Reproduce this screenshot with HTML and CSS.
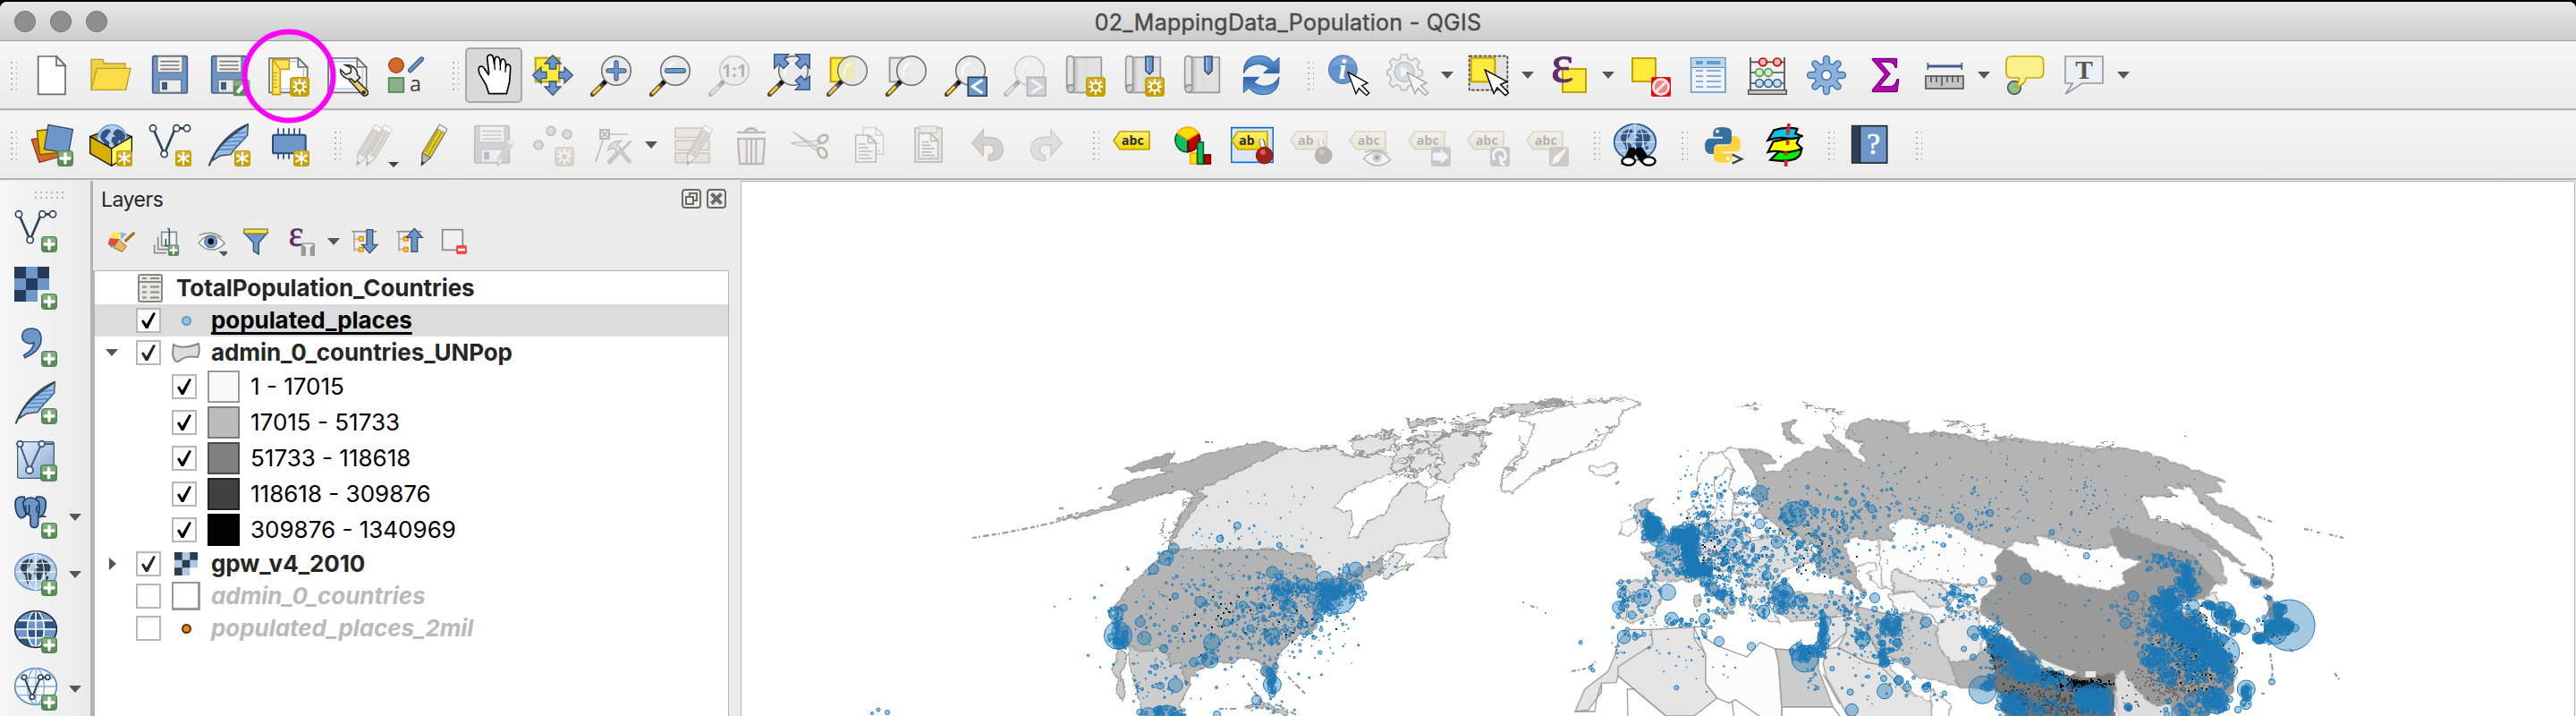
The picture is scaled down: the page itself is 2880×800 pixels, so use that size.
FILE: index.html
```html
<!DOCTYPE html>
<html lang="en">
<head>
<meta charset="utf-8">
<title>02_MappingData_Population - QGIS</title>
<link rel="stylesheet" href="styles.css">
</head>
<body>
<svg class="defs" width="0" height="0" aria-hidden="true">
<defs>
  <linearGradient id="gBlue" x1="0" y1="0" x2="0" y2="1"><stop offset="0" stop-color="#6fa0dc"/><stop offset="1" stop-color="#2c62a6"/></linearGradient>
  <linearGradient id="gPage" x1="0" y1="0" x2="1" y2="0"><stop offset="0" stop-color="#bdbdbd"/><stop offset=".4" stop-color="#e2e2e2"/><stop offset="1" stop-color="#dcdcdc"/></linearGradient>
  <linearGradient id="gMesh" x1="0" y1="0" x2="1" y2="1"><stop offset="0" stop-color="#eef2f8"/><stop offset="1" stop-color="#7ea3d2"/></linearGradient>
  <linearGradient id="gYel" x1="0" y1="0" x2="0" y2="1"><stop offset="0" stop-color="#fff27a"/><stop offset="1" stop-color="#ecd500"/></linearGradient>
</defs>
<symbol id="b-plus" viewBox="0 0 54 54"><rect x="1.500" y="1.500" width="51" height="51" rx="9" fill="#5a8c5a" stroke="#4e854e" stroke-width="3"/><path d="M5 8q0-4 4-4h36q4 0 4 4v18H5z" fill="#83ad83"/><path d="M27 12v30M12 27h30" stroke="#fff" stroke-width="10" stroke-linecap="round"/></symbol>
<symbol id="b-star" viewBox="0 0 54 54"><rect width="54" height="54" rx="9" fill="#c4a000"/><path d="M5 8q0-4 4-4h36q4 0 4 4v18H5z" fill="#d3b53c"/><path d="M27 7v40M9.700 17l34.600 20M44.300 17L9.700 37" stroke="#fff" stroke-width="6.500" stroke-linecap="round"/></symbol>
<symbol id="b-gear" viewBox="0 0 66 66"><rect width="66" height="66" rx="11" fill="#c4a000"/><path d="M6 10q0-4 4-4h46q4 0 4 4v20H6z" fill="#d3b53c"/><path d="M33 7v52M9 33h48M14 15l38 36M52 15L14 51" stroke="#fff" stroke-width="6"/><circle cx="33" cy="33" r="13" fill="#c4a000" stroke="#fff" stroke-width="6"/><circle cx="33" cy="33" r="6" fill="#c4a000"/></symbol>
<symbol id="land" viewBox="0 0 100 100"><path d="M8 38l6-16 14-8 14 0 2 10-8 4-4 10-8 6 6 6 10 8-2 14-8 14-6-12-2-14-8-8-4-8zM52 30l4-10 12-8 16 8 10 14-2 16-8 2-4 8-6-10-6 0-2-8zM50 40l14-2 10 8-4 12-4 14-8 6-4-14-8-10zM80 62l8 0 0 8-8 4z"/></symbol>
<symbol id="graticule" viewBox="0 0 144 126"><ellipse cx="72" cy="63" rx="28" ry="60"/><path d="M4 63h136M14 34h116M14 92h116M72 3v120"/></symbol>
<symbol id="lens" viewBox="0 0 144 144"><path d="M7 137L44 100" stroke="#4a4a4a" stroke-width="16" stroke-linecap="round"/><path d="M9 135L34 110" stroke="#fcc414" stroke-width="9"/><path d="M9 132L32 108" stroke="#ffe58a" stroke-width="3"/><circle cx="48" cy="96" r="8" fill="#111"/><circle cx="87" cy="57" r="49" fill="#e9e9e9" stroke="#6a6a6a" stroke-width="4.500"/><path d="M60 72c-4-22 8-36 24-40" fill="none" stroke="#fff" stroke-width="8" opacity=".7" stroke-linecap="round"/></symbol>
<symbol id="cursor" viewBox="0 0 78 84"><path d="M3 3l66 36-19 9 24 24-9 9-25-24-10 18z" fill="#fff" stroke="#000" stroke-width="4" stroke-linejoin="miter"/></symbol>
<symbol id="tag" viewBox="0 0 126 66"><path d="M3 33L24 3h99v60H24z" fill="url(#gYel)" stroke="#c4a000" stroke-width="5"/></symbol>
<symbol id="feather" viewBox="0 0 144 144"><path d="M136 2C92 18 42 62 22 106l-4 18 24-16 36-4 14-20 42-44z" fill="#9bbde6" stroke="#2e4459" stroke-width="4"/><path d="M60 62l60-4M48 74l60-2M36 88l56-2M72 48l60-4M88 34l46-4" stroke="#5b8cc9" stroke-width="5"/><path d="M134 3C88 34 30 70 5 142" fill="none" stroke="#2e4459" stroke-width="6"/></symbol>
<symbol id="vnodes" viewBox="0 0 144 144"><path d="M15 16L53 102 90 16h38" fill="none" stroke="#2e4459" stroke-width="8"/><g fill="#fff" stroke="#2e4459" stroke-width="5"><circle cx="15" cy="16" r="11"/><circle cx="53" cy="102" r="11"/><circle cx="94" cy="16" r="11"/><circle cx="129" cy="16" r="11"/></g></symbol>
<symbol id="floppy" viewBox="0 0 144 144"><path d="M20 8h104q6 0 6 6v112q0 6-6 6H20q-6 0-6-6V14q0-6 6-6z" fill="#6d97c9" stroke="#3e5f87" stroke-width="5"/><rect x="30" y="9" width="84" height="54" rx="4" fill="#f2f2f2" stroke="#7a7a7a" stroke-width="4"/><path d="M40 26h64M40 39h64M40 52h64" stroke="#7a7a7a" stroke-width="5"/><rect x="36" y="87" width="74" height="43" fill="#ececec" stroke="#777" stroke-width="4"/><rect x="45" y="95" width="18" height="26" fill="#3b5a85"/></symbol>
<symbol id="pencil" viewBox="0 0 90 144"><path d="M64 4l26 15-56 95-30 26 3-42z" fill="#e5d22c" stroke="#777" stroke-width="4"/><path d="M64 4l26 15-8 13-25-15z" fill="#eee" stroke="#999" stroke-width="3"/><path d="M60 22L18 96M72 28L28 104" stroke="#b39b00" stroke-width="5"/><path d="M7 98l27 16-30 26z" fill="#b5b5b5" stroke="#555" stroke-width="3"/><path d="M5 126l8 5-10 10z" fill="#222"/></symbol>
<symbol id="redpencil" viewBox="0 0 90 144"><path d="M64 4l26 15-56 95-30 26 3-42z" fill="#cfa79c" stroke="#8a6a62" stroke-width="4"/><path d="M64 4l26 15-8 13-25-15z" fill="#fff" stroke="#999" stroke-width="3"/><path d="M60 22L18 96M72 28L28 104" stroke="#a07468" stroke-width="5"/><path d="M7 98l27 16-30 26z" fill="#eee" stroke="#555" stroke-width="3"/><path d="M5 126l8 5-10 10z" fill="#222"/></symbol>
<symbol id="map" viewBox="0 0 144 144"><path d="M36 12h94v118H26" fill="#e1e1e1" stroke="#979797" stroke-width="5"/><rect x="38" y="15" width="45" height="110" fill="url(#gPage)"/><path d="M14 20q0-12 12-12t12 12v86q-24-6-24 12z" fill="#e4e4e4" stroke="#979797" stroke-width="5"/><path d="M38 106q-22-4-22 12t14 11l8-6z" fill="#cfcfcf" stroke="#979797" stroke-width="5"/></symbol>
<symbol id="ribbon" viewBox="0 0 30 66"><path d="M3 3h24v48l-12 12-12-12z" fill="#6d97c9" stroke="#34527a" stroke-width="5"/><path d="M9 6v44" stroke="#9fc0e8" stroke-width="5"/></symbol>

<symbol id="i-new" viewBox="0 0 144 144"><path d="M26 9h62l29 30v97H26z" fill="#fff" stroke="#6c6c6c" stroke-width="5"/><path d="M87 9v31h30z" fill="#eee" stroke="#6c6c6c" stroke-width="5"/></symbol>
<symbol id="i-open" viewBox="0 0 144 144"><path d="M6 120V19h39l4 14h71v20" fill="#f0d048" stroke="#b9a02c" stroke-width="4"/><path d="M6 121L25 49h113l-16 72z" fill="#fcdc45" stroke="#b9a02c" stroke-width="4"/></symbol>
<symbol id="i-save" viewBox="0 0 144 144"><use href="#floppy" width="144" height="144" x="0" y="0"/></symbol>
<symbol id="i-saveas" viewBox="0 0 144 144"><use href="#floppy" width="144" height="144" x="0"/><rect x="86" y="86" width="56" height="56" rx="8" fill="#5a8c5a"/><path d="M88 90h52v18H88z" fill="#83ad83"/><path d="M100 130l26-30" stroke="#fff" stroke-width="12"/></symbol>
<symbol id="page-frame" viewBox="0 0 144 144"><path d="M9 15h98l30 30v85H9z" fill="#fff" stroke="#6c6c6c" stroke-width="5"/><path d="M20 26h84M124 50v68H20V26" fill="none" stroke="#b4c8f0" stroke-width="5"/><path d="M106 15v30h30z" fill="#eee" stroke="#6c6c6c" stroke-width="5"/></symbol>
<symbol id="i-layout" viewBox="0 0 144 144"><use href="#page-frame" width="144" height="144"/><path d="M20 20h56v32H46v85H20z" fill="#fce45c" stroke="#c4a000" stroke-width="5"/><path d="M20 20l26 32M22 64h14M22 76h10M22 88h14M22 100h10M22 112h14" stroke="#c4a000" stroke-width="4"/><use href="#b-gear" x="78" y="78" width="66" height="66"/></symbol>
<symbol id="i-manager" viewBox="0 0 144 144"><use href="#page-frame" width="144" height="144"/><path d="M90 74l52 52q4 14-14 16L80 90z" fill="#ecd06a" stroke="#333" stroke-width="5"/><circle cx="128" cy="130" r="7" fill="#333"/><path d="M66 38q22-2 36 14 6 12 4 18l10 10-18 16-12-12q-14 4-26-8-12-10-10-22l18 16 16-6 2-16z" fill="#e8ece8" stroke="#333" stroke-width="5"/></symbol>
<symbol id="i-style" viewBox="0 0 144 144"><circle cx="39" cy="39" r="25" fill="#d4682a" stroke="#96461a" stroke-width="4"/><path d="M86 56l38-38" stroke="#35587f" stroke-width="16" stroke-linecap="round"/><path d="M86 56l38-38" stroke="#6d97c9" stroke-width="9" stroke-linecap="round"/><rect x="14" y="81" width="50" height="48" fill="#8bb08b" stroke="#4e854e" stroke-width="5"/><text x="84" y="125" class="glyph" font-size="70" fill="#3c3c3c">a</text></symbol>
<symbol id="i-hand" viewBox="0 0 144 144"><path d="M56 134L46 104 26 70Q18 54 24 44q10-6 18 8l12 18 2-4L50 14Q52 2 62 4q8 2 9 12l3 20q0-28 10-26 10 0 10 28 2-22 10-20 10 2 8 30 2-14 9-12 8 2 7 14l-3 44-10 40z" fill="#fff" stroke="#000" stroke-width="5"/><path d="M74 32l2 22M94 36l0 20M112 46l-1 16" stroke="#000" stroke-width="4"/></symbol>
<symbol id="i-panmap" viewBox="0 0 144 144"><rect x="14" y="14" width="80" height="80" fill="#ffeb3c" stroke="#c4a000" stroke-width="6"/><g fill="#6d97c9" stroke="#34527a" stroke-width="4"><path id="pa" d="M72 5l27 28H83v18H61V33H45z"/><use href="#pa" transform="rotate(90 72 72)"/><use href="#pa" transform="rotate(180 72 72)"/><use href="#pa" transform="rotate(270 72 72)"/></g></symbol>
<symbol id="i-zoomin" viewBox="0 0 144 144"><use href="#lens" width="144" height="144"/><path d="M87 30v54M60 57h54" stroke="#35587f" stroke-width="16" stroke-linecap="round"/><path d="M87 30v54M60 57h54" stroke="#6d97c9" stroke-width="10" stroke-linecap="round"/></symbol>
<symbol id="i-zoomout" viewBox="0 0 144 144"><use href="#lens" width="144" height="144"/><path d="M60 57h54" stroke="#35587f" stroke-width="18" stroke-linecap="round"/><path d="M60 57h54" stroke="#6d97c9" stroke-width="12" stroke-linecap="round"/></symbol>
<symbol id="i-zoom11" viewBox="0 0 144 144"><use href="#lens" width="144" height="144"/><text x="87" y="78" class="glyph" font-size="60" font-weight="700" text-anchor="middle" fill="#333">1:1</text></symbol>
<symbol id="i-zoomfull" viewBox="0 0 144 144"><use href="#lens" width="144" height="144"/><g fill="#6d97c9" stroke="#34527a" stroke-width="4"><path d="M23 2h48L56 17l16 16-18 17-16-16-15 15z"/><path d="M142 2v47l-15-15-16 16-17-17 16-16L94 2z"/><path d="M142 121H94l15-15-15-15 18-17 15 15 15-14z"/></g></symbol>
<symbol id="i-zoomsel" viewBox="0 0 144 144"><rect x="14" y="14" width="80" height="80" fill="#ffeb3c" stroke="#c4a000" stroke-width="6"/><use href="#lens" width="144" height="144" opacity=".93"/><path d="M62 20h32v74l-42-8q-14-40 10-66z" fill="#ffe93c" opacity=".18"/></symbol>
<symbol id="i-zoomlayer" viewBox="0 0 144 144"><rect x="14" y="14" width="80" height="80" fill="#e8e8e4" stroke="#999" stroke-width="6"/><use href="#lens" width="144" height="144"/></symbol>
<symbol id="i-zoomlast" viewBox="0 0 144 144"><use href="#lens" width="144" height="144"/><rect x="79" y="79" width="63" height="63" fill="#6d97c9" stroke="#243b57" stroke-width="5"/><path d="M127 88L94 110l33 22" fill="none" stroke="#fff" stroke-width="9"/></symbol>
<symbol id="i-zoomnext" viewBox="0 0 144 144"><use href="#lens" width="144" height="144"/><rect x="79" y="79" width="63" height="63" fill="#6d97c9" stroke="#243b57" stroke-width="5"/><path d="M94 88l33 22-33 22" fill="none" stroke="#fff" stroke-width="9"/></symbol>
<symbol id="i-newview" viewBox="0 0 144 144"><use href="#map" width="144" height="144"/><use href="#b-gear" x="78" y="78" width="66" height="66"/></symbol>
<symbol id="i-newbook" viewBox="0 0 144 144"><use href="#map" width="144" height="144"/><use href="#ribbon" x="78" y="6" width="30" height="66"/><use href="#b-gear" x="78" y="78" width="66" height="66"/></symbol>
<symbol id="i-books" viewBox="0 0 144 144"><use href="#map" width="144" height="144"/><use href="#ribbon" x="78" y="6" width="30" height="66"/></symbol>
<symbol id="i-refresh" viewBox="0 0 144 144"><g id="rf"><path d="M13 66Q12 10 62 7q34-2 52 22l18-16v52H80l18-17Q64 24 32 44 18 54 13 66z" fill="url(#gBlue)" stroke="#34629c" stroke-width="3"/></g><use href="#rf" transform="rotate(180 72.500 72)"/></symbol>

<symbol id="i-info" viewBox="0 0 144 144"><circle cx="52" cy="53" r="48" fill="#6592c8" stroke="#4f7cb2" stroke-width="3"/><path d="M10 45Q26 6 58 10q30 4 38 30-40-14-86 5z" fill="#86add8" opacity=".6"/><text x="51" y="85" class="serif" font-size="96" font-style="italic" font-weight="700" text-anchor="middle" fill="#fff">i</text><use href="#cursor" x="66" y="59" width="78" height="84"/></symbol>
<symbol id="i-action" viewBox="0 0 144 144"><path d="M50 3h20l3 15 12 5 13-9 13 14-8 13 5 12 13 3v16l-14 4-5 12 8 12-13 13-12-8-13 5-3 12H50l-4-13-12-5-12 8L9 99l8-13-5-12-9-3V56l10-3 5-12-8-13 13-13 12 8 12-5z" fill="#e9e9e9" stroke="#555" stroke-width="5"/><circle cx="60" cy="61" r="33" fill="#9fb0c2" stroke="#555" stroke-width="4"/><path d="M48 42v38l30-19z" fill="#fff"/><use href="#cursor" x="66" y="59" width="78" height="84"/></symbol>
<symbol id="i-select" viewBox="0 0 144 144"><rect x="8" y="8" width="128" height="114" fill="#e3e3e3" stroke="#444" stroke-width="5" stroke-dasharray="11 5"/><rect x="14" y="14" width="80" height="80" fill="#ffeb3c" stroke="#c4a000" stroke-width="6"/><use href="#cursor" x="57" y="50" width="87" height="94"/></symbol>
<symbol id="i-selexpr" viewBox="0 0 144 144"><rect x="51" y="51" width="78" height="78" fill="#ffeb3c" stroke="#c4a000" stroke-width="6"/><text x="12" y="94" class="serif" font-size="178" fill="#5e2f6c" stroke="#5e2f6c" stroke-width="3">ε</text></symbol>
<symbol id="i-desel" viewBox="0 0 144 144"><rect x="15" y="15" width="78" height="78" fill="#ffeb3c" stroke="#c4a000" stroke-width="6"/><rect x="78" y="78" width="66" height="66" rx="6" fill="#d81414"/><circle cx="111" cy="111" r="26" fill="#e88" stroke="#f6eaea" stroke-width="8"/><path d="M93 129l36-36" stroke="#f6eaea" stroke-width="9"/></symbol>
<symbol id="i-attr" viewBox="0 0 144 144"><rect x="14" y="14" width="115" height="115" fill="#eef3fa" stroke="#6d97c9" stroke-width="5"/><path d="M16 16h111v28H16z" fill="#b9dcec"/><path d="M14 46h115" stroke="#6d97c9" stroke-width="4"/><path d="M30 30h24M66 30h46" stroke="#6d97c9" stroke-width="12"/><path d="M30 57h24M66 57h48M30 75h24M66 75h48M30 93h24M66 93h48M30 111h24M66 111h48" stroke="#6d97c9" stroke-width="5"/></symbol>
<symbol id="i-abacus" viewBox="0 0 144 144"><path d="M15 12v110M129 12v110M15 28h114M15 63h114M15 99h114" stroke="#4a4a4a" stroke-width="5"/><rect x="8" y="122" width="128" height="14" fill="#c8c8c8" stroke="#4a4a4a" stroke-width="4"/><g stroke-width="5"><g fill="#ffb3b3" stroke="#b00"><circle cx="57" cy="28" r="13"/><circle cx="105" cy="28" r="13"/></g><g fill="#c8f2c8" stroke="#5a9a5a"><circle cx="45" cy="63" r="13"/><circle cx="75" cy="63" r="13"/></g><g fill="#c5e1f2" stroke="#3f6a8c"><circle cx="45" cy="99" r="13"/><circle cx="75" cy="99" r="13"/><circle cx="105" cy="99" r="13"/></g></g></symbol>
<symbol id="i-cog" viewBox="0 0 144 144"><g stroke="#3c73b9" stroke-width="25" stroke-linecap="round"><path d="M72 18v108M18 72h108M34 34l76 76M110 34l-76 76"/></g><circle cx="72" cy="72" r="40" fill="#8fb0d8" stroke="#3c73b9" stroke-width="4"/><g stroke="#8fb0d8" stroke-width="16" stroke-linecap="round"><path d="M72 18v108M18 72h108M34 34l76 76M110 34l-76 76"/></g><circle cx="72" cy="72" r="16" fill="#fafafa" stroke="#3c73b9" stroke-width="5"/></symbol>
<symbol id="i-sigma" viewBox="0 0 144 144"><path d="M28 16h82v30h-6q-4-16-20-18H54l34 40-36 42h34q20-2 24-24h7l-6 42H28v-7l42-52-42-48z" fill="#b400b4" stroke="#5c005c" stroke-width="3"/></symbol>
<symbol id="i-ruler" viewBox="0 0 144 144"><path d="M16 30v24M130 30v24" stroke="#3b5a85" stroke-width="5"/><path d="M16 42h114" stroke="#3b5a85" stroke-width="9"/><rect x="9" y="75" width="126" height="42" fill="#c4c4c4" stroke="#555" stroke-width="5"/><path d="M27 76v20M45 76v20M63 76v32M81 76v20M99 76v20M117 76v20" stroke="#555" stroke-width="5"/></symbol>
<symbol id="i-tip" viewBox="0 0 144 144"><circle cx="36" cy="114" r="22" fill="#8bbf8b" stroke="#555" stroke-width="5"/><path d="M26 9h90q18 0 18 18v36q0 18-18 18H76q-6 28-38 30 14-10 14-30H26Q9 81 9 63V27Q9 9 26 9z" fill="#fcf08c" stroke="#c9a900" stroke-width="5"/></symbol>
<symbol id="i-textann" viewBox="0 0 144 144"><path d="M9 9h126v90H66L10 135l24-36H9z" fill="#e9f0f3" stroke="#999" stroke-width="5"/><text x="72" y="84" class="serif" font-size="88" font-weight="700" text-anchor="middle" fill="#555">T</text></symbol>

<symbol id="i-addlayer" viewBox="0 0 144 144"><path d="M4 54l70-16 22 74-66 18z" fill="#d4682a" stroke="#8c3c12" stroke-width="4"/><path d="M22 24l64-6 6 80-60 6z" fill="#edc500" stroke="#6e5c00" stroke-width="4"/><path d="M60 4l82 16-14 80-82-14z" fill="#6d97c9" stroke="#2c4a70" stroke-width="4"/><use href="#b-plus" x="90" y="90" width="54" height="54"/></symbol>
<symbol id="i-gpkg" viewBox="0 0 144 144"><path d="M2 44l72-28 68 28-68 40z" fill="#ad9500" stroke="#111" stroke-width="4"/><circle cx="76" cy="54" r="50" fill="#b4cce8" stroke="#6d97c9" stroke-width="4"/><use href="#land" x="28" y="6" width="98" height="98" fill="#2f5580"/><path d="M2 44l72 40v58L2 100z" fill="#d8ae00" stroke="#111" stroke-width="4"/><path d="M142 44L74 84v58l68-42z" fill="#fffb6c" stroke="#111" stroke-width="4"/><use href="#b-star" x="90" y="90" width="54" height="54"/></symbol>
<symbol id="i-newshp" viewBox="0 0 144 144"><use href="#vnodes" width="144" height="144"/><use href="#b-star" x="90" y="90" width="54" height="54"/></symbol>
<symbol id="i-newspat" viewBox="0 0 144 144"><use href="#feather" width="144" height="144"/><use href="#b-star" x="90" y="90" width="54" height="54"/></symbol>
<symbol id="i-mem" viewBox="0 0 144 144"><path d="M39 16v103M57 16v103M75 16v103M93 16v103M111 16v103" stroke="#2c4a70" stroke-width="5"/><rect x="21" y="38" width="110" height="62" rx="5" fill="#6d97c9" stroke="#2c4a70" stroke-width="6"/><use href="#b-star" x="90" y="90" width="54" height="54"/></symbol>
<symbol id="i-edits" viewBox="0 0 144 144"><use href="#redpencil" x="6" y="0" width="90" height="144"/><use href="#redpencil" x="38" y="0" width="90" height="144"/></symbol>
<symbol id="i-pencil" viewBox="0 0 144 144"><use href="#pencil" x="24" y="0" width="90" height="144"/></symbol>
<symbol id="i-saveedit" viewBox="0 0 144 144"><use href="#floppy" x="-6" y="0" width="144" height="144"/><use href="#redpencil" x="80" y="52" width="62" height="92"/></symbol>
<symbol id="i-points" viewBox="0 0 144 144"><g fill="#9db79d" stroke="#555" stroke-width="5"><circle cx="66" cy="25" r="15"/><circle cx="120" cy="36" r="15"/><circle cx="24" cy="72" r="15"/></g><use href="#b-gear" x="78" y="78" width="66" height="66"/></symbol>
<symbol id="i-vertex" viewBox="0 0 144 144"><path d="M60 36h66M44 50L18 128" stroke="#555" stroke-width="5"/><rect x="33" y="21" width="30" height="30" fill="#ddd" stroke="#444" stroke-width="6"/><path d="M38 26l20 20M58 26L38 46" stroke="#444" stroke-width="5"/><path d="M62 136l74-78" stroke="#666" stroke-width="8"/><path d="M60 132l40-44 34 44" fill="none" stroke="#8a7a48" stroke-width="14"/><path d="M58 90q8-32 46-32l-14 12 14 16-12 12-14-16z" fill="#bbb" stroke="#555" stroke-width="4"/></symbol>
<symbol id="i-tabedit" viewBox="0 0 144 144"><g fill="#e0cf8c" stroke="#8f7c2c" stroke-width="5"><rect x="15" y="15" width="114" height="32"/><rect x="15" y="57" width="114" height="32"/><rect x="15" y="99" width="114" height="32"/></g><use href="#redpencil" x="49" y="2" width="92" height="140"/></symbol>
<symbol id="i-trash" viewBox="0 0 144 144"><path d="M24 30h96M50 28q20-24 44 0" fill="none" stroke="#a03030" stroke-width="8"/><path d="M27 51h90l-6 84H33z" fill="#f2e4e4" stroke="#a03030" stroke-width="7"/><path d="M56 52v80M72 52v80M88 52v80" stroke="#a03030" stroke-width="6"/></symbol>
<symbol id="i-cut" viewBox="0 0 144 144"><path d="M14 28l84 54-8 8zM6 66l100-10-6 14q-50 14-94-4z" fill="#ddd" stroke="#666" stroke-width="4"/><g fill="none" stroke="#8c2c2c" stroke-width="8"><ellipse cx="114" cy="52" rx="18" ry="12" transform="rotate(-35 114 52)"/><ellipse cx="112" cy="98" rx="13" ry="19" transform="rotate(-35 112 98)"/></g></symbol>
<symbol id="doc" viewBox="0 0 74 96"><path d="M3 3h42l26 26v64H3z" fill="#fafafa" stroke="#555" stroke-width="5"/><path d="M45 3v26h26zM13 33h24M13 45h32M13 57h46M13 69h36M13 81h46" fill="none" stroke="#555" stroke-width="5"/></symbol>
<symbol id="i-copy" viewBox="0 0 144 144"><use href="#doc" x="48" y="10" width="74" height="96" opacity=".6"/><use href="#doc" x="23" y="36" width="74" height="96"/></symbol>
<symbol id="i-paste" viewBox="0 0 144 144"><rect x="27" y="15" width="90" height="114" fill="#d8d0c8" stroke="#7a6a5a" stroke-width="6"/><use href="#doc" x="35" y="31" width="74" height="90"/><rect x="43" y="9" width="58" height="22" fill="#d8d8d8" stroke="#777" stroke-width="4"/></symbol>
<symbol id="i-undo" viewBox="0 0 144 144"><path d="M20 66l38-46v26q66-4 66 40 0 38-48 38l0-18q18-2 18-20t-36-14v36z" fill="#c9895a" stroke="#8c5c34" stroke-width="4"/></symbol>
<symbol id="i-redo" viewBox="0 0 144 144"><path d="M124 66L86 20v26q-66-4-66 40 0 38 48 38l0-18q-18-2-18-20t36-14v36z" fill="#a8c4a8" stroke="#5c8c5c" stroke-width="4"/></symbol>

<symbol id="i-abc" viewBox="0 0 144 144"><use href="#tag" y="24" width="126" height="66"/><text x="67" y="71" class="label" font-size="42" text-anchor="middle">abc</text></symbol>
<symbol id="i-diagram" viewBox="0 0 144 144"><g stroke-width="5"><path d="M54 54V96A41 41 0 0 1 19 32z" fill="#0fc060" stroke="#075c2c"/><path d="M54 54V94A41 41 0 0 0 89 32z" fill="#c00000" stroke="#5c0000"/><path d="M54 54L19 32A41 41 0 0 1 89 32z" fill="#ffe000" stroke="#ffae00"/><rect x="62" y="99" width="22" height="36" fill="#ffe000" stroke="#ffae00"/><rect x="110" y="105" width="20" height="30" fill="#c00000" stroke="#5c0000"/><rect x="86" y="63" width="20" height="73" fill="#0fc060" stroke="#075c2c"/></g></symbol>
<symbol id="abpin" viewBox="0 0 144 144"><use href="#tag" y="24" width="126" height="66"/><text x="54" y="71" class="label" font-size="42" text-anchor="middle">ab</text><path d="M104 60l8 30" stroke="#444" stroke-width="18" stroke-linecap="round"/><path d="M103 58l8 30" stroke="#eee" stroke-width="13" stroke-linecap="round"/><circle cx="113" cy="107" r="28" fill="#a02020" stroke="#7c1414" stroke-width="3"/><circle cx="108" cy="96" r="9" fill="#d86060"/></symbol>
<symbol id="i-pinon" viewBox="0 0 144 144"><rect x="2" y="14" width="140" height="116" fill="#dbe6f4" stroke="#0a6cdc" stroke-width="5"/><use href="#abpin" width="144" height="144"/></symbol>
<symbol id="i-labeye" viewBox="0 0 144 144"><use href="#tag" y="24" width="126" height="66"/><text x="67" y="71" class="label" font-size="42" text-anchor="middle">abc</text><path d="M50 118q44-50 90 4-46 40-90-4zM54 96q40-14 76 4" fill="#fff" stroke="#555" stroke-width="5"/><circle cx="94" cy="114" r="17" fill="#8ab"/><circle cx="94" cy="114" r="8" fill="#222"/></symbol>
<symbol id="i-labmove" viewBox="0 0 144 144"><use href="#tag" y="24" width="126" height="66"/><text x="67" y="71" class="label" font-size="42" text-anchor="middle">abc</text><rect x="78" y="78" width="66" height="66" rx="9" fill="#6c7c8c"/><path d="M84 98h26V86l28 25-28 25v-12H84z" fill="#fff"/></symbol>
<symbol id="i-labrot" viewBox="0 0 144 144"><use href="#tag" y="24" width="126" height="66"/><text x="67" y="71" class="label" font-size="42" text-anchor="middle">abc</text><rect x="78" y="78" width="66" height="66" rx="9" fill="#6c7c8c"/><path d="M94 122a21 21 0 1 1 32-2l-10 4M112 108l2 24 14 8" fill="none" stroke="#fff" stroke-width="9"/></symbol>
<symbol id="i-labedit" viewBox="0 0 144 144"><use href="#tag" y="24" width="126" height="66"/><text x="67" y="71" class="label" font-size="42" text-anchor="middle">abc</text><rect x="78" y="78" width="66" height="66" rx="9" fill="#8c8450"/><path d="M86 138l8-26 38-28 4 6-28 38z" fill="#fff"/></symbol>
<symbol id="i-meta" viewBox="0 0 144 144"><ellipse cx="72" cy="62" rx="70" ry="60" fill="#9fc0e6" stroke="#2c5080" stroke-width="5"/><use href="#land" x="10" y="4" width="124" height="116" fill="#2f5580"/><use href="#graticule" width="144" height="124" fill="none" stroke="#dfeaf6" stroke-width="3"/><path d="M54 80h16l4 8 4-8h18l22 34 24 14-8 10-42-6-18-28-18 28-32 6z" fill="#000"/><g fill="#fff" stroke="#000" stroke-width="7"><ellipse cx="50" cy="126" rx="22" ry="14"/><ellipse cx="118" cy="126" rx="22" ry="14"/></g></symbol>
<symbol id="i-python" viewBox="0 0 144 144"><path d="M70 12q-30 0-30 18v14h32v6H30q-18 0-18 26 0 24 18 26h12V86q0-16 18-16h28q14 0 14-14V30q0-18-32-18z" fill="#35709f"/><path d="M74 132q30 0 30-18v-14H72v-6h42q18 0 18-26 0-24-18-26h-12v16q0 16-18 16H56q-14 0-14 14v26q0 18 32 18z" fill="#ffd43b"/><circle cx="54" cy="26" r="6" fill="#fff"/><circle cx="89" cy="118" r="6" fill="#fff"/><path d="M104 104l32 15-32 15" fill="none" stroke="#444" stroke-width="7"/></symbol>
<symbol id="i-stack" viewBox="0 0 144 144"><g stroke="#000" stroke-width="7"><path d="M34 122q20-20 28-28l74-14q6 26-18 38-30 12-84 4z" fill="#0e0"/><path d="M26 96l18-36 88-16-10 22 18 18q-40 16-70 10-24-4-44 2z" fill="#ff0"/><path d="M26 56l20-34q44-12 78-4l-6 16 22 8q-26 14-62 6-26-2-52 8z" fill="#0cc4e4"/></g><path d="M96 0l-4 38M92 56v16M86 94v12M86 122v22" stroke="#e02020" stroke-width="11"/></symbol>
<symbol id="i-help" viewBox="0 0 144 144"><rect x="14" y="8" width="117" height="124" fill="#6d97c9" stroke="#1e2630" stroke-width="5"/><path d="M16 10h24v120H16z" fill="#2e3e4e"/><path d="M41 8v124" stroke="#1e2630" stroke-width="4"/><text x="86" y="103" class="serif" font-size="100" text-anchor="middle" fill="#fff" stroke="#fff" stroke-width="2">?</text></symbol>

<symbol id="s-vector" viewBox="0 0 144 144"><use href="#vnodes" width="144" height="144"/><use href="#b-plus" x="90" y="90" width="54" height="54"/></symbol>
<symbol id="s-raster" viewBox="0 0 144 144"><path d="M0 0h117v117H0z" fill="#6d97c9"/><path d="M0 0h39v39H0zM78 0h39v39H78zM39 39h39v39H39zM0 78h39v39H0z" fill="#243b5c"/><path d="M78 78h39v39H78z" fill="#f1f1f1"/><use href="#b-plus" x="90" y="90" width="54" height="54"/></symbol>
<symbol id="s-comma" viewBox="0 0 144 144"><path d="M56 15q34 0 34 36 0 38-54 62l-4-8q34-20 34-42-8 4-18 2-22-4-22-26 2-22 30-24z" fill="#6d97c9" stroke="#2f5580" stroke-width="5"/><use href="#b-plus" x="90" y="90" width="54" height="54"/></symbol>
<symbol id="s-feather" viewBox="0 0 144 144"><use href="#feather" width="144" height="144"/><use href="#b-plus" x="90" y="90" width="54" height="54"/></symbol>
<symbol id="s-mesh" viewBox="0 0 144 144"><rect x="11" y="11" width="122" height="122" rx="7" fill="url(#gMesh)" stroke="#3e5f87" stroke-width="4"/><path d="M18 18l33 88 40-88h40" fill="none" stroke="#3e5f87" stroke-width="6"/><g fill="#fff" stroke="#3e5f87" stroke-width="6"><circle cx="19" cy="18" r="10"/><circle cx="92" cy="18" r="10"/><circle cx="51" cy="106" r="12"/></g><use href="#b-plus" x="87" y="87" width="57" height="57"/></symbol>
<symbol id="s-pg" viewBox="0 0 144 144"><g fill="#6d97c9" stroke="#243b5c" stroke-width="5"><path d="M34 4Q4 0 3 24q0 40 18 50 10 2 18-10zM74 4q32-4 32 20 0 36-20 48-8-2-14-12z"/><path d="M30 20Q54-8 82 20q6 26-2 46v30q-4 12-14 10-12 0-12-12V66Q30 60 30 20z"/></g><path d="M88 66q10 6 18 2M38 32v26q10 6 12-4V30M78 32q-6 14 0 26" fill="none" stroke="#243b5c" stroke-width="5"/><use href="#b-plus" x="90" y="90" width="54" height="54"/></symbol>
<symbol id="s-wms" viewBox="0 0 144 144"><ellipse cx="72" cy="63" rx="70" ry="61" fill="#b4cce8" stroke="#6d97c9" stroke-width="5"/><use href="#land" x="8" y="4" width="124" height="118" fill="#2e4459"/><use href="#graticule" width="144" height="126" fill="none" stroke="#fff" stroke-width="3"/><use href="#b-plus" x="90" y="90" width="54" height="54"/></symbol>
<symbol id="s-wcs" viewBox="0 0 144 144"><ellipse cx="72" cy="63" rx="70" ry="61" fill="#6d97c9"/><path d="M46 20Q72-14 98 20v14H46zM14 34h32l-4 29H3zM98 34h32l11 29H102zM42 63h60l-4 30H46zM14 93h32l10 26Q28 114 14 93zM98 93h32q-14 22-42 26z" fill="#2f5580" transform="translate(0 -1)"/><use href="#graticule" width="144" height="126" fill="none" stroke="#fff" stroke-width="5"/><ellipse cx="72" cy="63" rx="70" ry="61" fill="none" stroke="#1f2f42" stroke-width="5"/><use href="#b-plus" x="90" y="90" width="54" height="54"/></symbol>
<symbol id="s-wfs" viewBox="0 0 144 144"><ellipse cx="72" cy="63" rx="70" ry="61" fill="#f4f7fb" stroke="#5b8cc9" stroke-width="5"/><use href="#graticule" width="144" height="126" fill="none" stroke="#86add8" stroke-width="4"/><path d="M33 32l27 66 28-66h24" fill="none" stroke="#2e4459" stroke-width="6"/><g fill="#fff" stroke="#2e4459" stroke-width="5"><circle cx="33" cy="32" r="8"/><circle cx="60" cy="98" r="8"/><circle cx="88" cy="32" r="8"/><circle cx="112" cy="32" r="8"/></g><use href="#b-plus" x="90" y="90" width="54" height="54"/></symbol>

<symbol id="p-brush" viewBox="0 0 108 108"><path d="M22 26l30-6-8 24-30-4z" fill="#fce64c"/><path d="M50 22l22 6-20 20z" fill="#8fb4e0"/><path d="M14 42l30 4-4 24-32-6z" fill="#f04438"/><path d="M12 62l20 4-14 8z" fill="#5b8cc9"/><path d="M94 26L68 50" stroke="#a8701c" stroke-width="10" stroke-linecap="round"/><path d="M44 46l26 24-14 18-30-14z" fill="#e4b868" stroke="#8c6420" stroke-width="3"/></symbol>
<symbol id="p-group" viewBox="0 0 108 108"><path d="M14 64v28h40M26 38v42h40" fill="none" stroke="#888a85" stroke-width="5"/><rect x="38" y="22" width="50" height="46" fill="#f4f4f2" stroke="#888a85" stroke-width="5"/><path d="M52 44v24h12V16q0-6-6-6" fill="none" stroke="#34527a" stroke-width="5"/><use href="#b-plus" x="59" y="64" width="38" height="38"/></symbol>
<symbol id="p-eye" viewBox="0 0 108 108"><path d="M12 58q42-50 88 2-46 44-88-2z" fill="#fff" stroke="#888a85" stroke-width="4"/><path d="M14 32q42-18 76 8" fill="none" stroke="#888a85" stroke-width="4"/><circle cx="53" cy="54" r="21" fill="#6d97c9" stroke="#3c6090" stroke-width="3"/><circle cx="53" cy="53" r="10" fill="#111"/><path d="M80 86h34l-17 18z" fill="#555"/></symbol>
<symbol id="p-filter" viewBox="0 0 108 108"><path d="M14 24l80 0-30 34v38l-18-10V58z" fill="#6d97c9" stroke="#34527a" stroke-width="4"/><rect x="15" y="12" width="78" height="15" fill="#fce83c" stroke="#8c8030" stroke-width="4"/></symbol>
<symbol id="p-expr" viewBox="0 0 108 108"><text x="14" y="70" class="serif" font-size="118" fill="#5e2f6c" stroke="#5e2f6c" stroke-width="2">ε</text><path d="M56 64q0-6 6-6h34q6 0 6 6v38H86V74H72v28H56z" fill="#999b96"/><path d="M60 62h38l-14 14H74z" fill="#eee"/></symbol>
<symbol id="p-tree" viewBox="0 0 108 108"><path d="M4 20h84" stroke="#888a85" stroke-width="5"/><path d="M12 20v66M12 45h16M12 80h16" fill="none" stroke="#aaa" stroke-width="5"/><path d="M29 38h13v13H29zM29 74h13v13H29z" fill="#fce83c" stroke="#f08c00" stroke-width="5"/></symbol>
<symbol id="p-expand" viewBox="0 0 108 108"><use href="#p-tree" width="108" height="108"/><path d="M54 14h20v50h16L64 92 38 64h16z" fill="#6d97c9" stroke="#34527a" stroke-width="4"/></symbol>
<symbol id="p-collapse" viewBox="0 0 108 108"><use href="#p-tree" width="108" height="108"/><path d="M54 88h20V40h17L64 10 37 40h17z" fill="#6d97c9" stroke="#34527a" stroke-width="4"/></symbol>
<symbol id="p-remove" viewBox="0 0 108 108"><rect x="8" y="14" width="68" height="68" fill="#f0f0ee" stroke="#888a85" stroke-width="5"/><rect x="54" y="66" width="36" height="30" rx="6" fill="#f04848"/><path d="M60 81h24" stroke="#fff" stroke-width="8"/></symbol>
</svg>

<header class="titlebar">
  <div class="lights"><i></i><i></i><i></i></div>
  <h1>02_MappingData_Population - QGIS</h1>
</header>
<nav class="toolbar" data-icons="new open save saveas layout manager style | *hand panmap zoomin zoomout -zoom11 zoomfull zoomsel zoomlayer zoomlast -zoomnext newview newbook books refresh | info -action v select v selexpr v desel attr abacus cog sigma ruler v tip textann v"></nav>
<nav class="toolbar second" data-icons="addlayer gpkg newshp newspat mem | -edits pencil -saveedit -points -vertex v -tabedit -trash -cut -copy -paste -undo -redo | abc diagram pinon -=abpin -labeye -labmove -labrot -labedit | meta | python stack | help |"></nav>
<svg class="marker" viewBox="0 0 106 106"><circle cx="53" cy="53" r="49.500"/></svg>
<main class="work">
  <aside class="side">
    <div class="grip"></div>
    <div class="tool"><svg><use href="#s-vector"/></svg></div>
    <div class="tool"><svg><use href="#s-raster"/></svg></div>
    <div class="tool"><svg><use href="#s-comma"/></svg></div>
    <div class="tool"><svg><use href="#s-feather"/></svg></div>
    <div class="tool"><svg><use href="#s-mesh"/></svg></div>
    <div class="tool"><svg><use href="#s-pg"/></svg><b class="drop"></b></div>
    <div class="tool"><svg><use href="#s-wms"/></svg><b class="drop"></b></div>
    <div class="tool"><svg><use href="#s-wcs"/></svg></div>
    <div class="tool"><svg><use href="#s-wfs"/></svg><b class="drop"></b></div>
  </aside>
  <section class="panel">
    <div class="panel-head"><h2>Layers</h2>
      <svg class="pbtn" viewBox="0 0 22 22"><rect x="1" y="1" width="20" height="20" rx="3"/><path d="M5 9h8v8H5zM9 8V5h8v8h-3"/></svg>
      <svg class="pbtn" viewBox="0 0 22 22"><rect x="1" y="1" width="20" height="20" rx="3"/><path class="x" d="M5.500 5.500l11 11M16.500 5.500l-11 11"/></svg>
    </div>
    <div class="panel-tools">
      <svg><use href="#p-brush"/></svg><svg><use href="#p-group"/></svg><svg><use href="#p-eye"/></svg><svg><use href="#p-filter"/></svg><svg><use href="#p-expr"/></svg><b class="drop"></b><svg><use href="#p-expand"/></svg><svg><use href="#p-collapse"/></svg><svg><use href="#p-remove"/></svg>
    </div>
    <div class="tree">
      <div class="row table"><svg class="ticon" viewBox="0 0 28 32"><rect x="1" y="1" width="26" height="30" rx="2"/><path d="M1 9h26M5 5h5M14 5h10M5 14.500h5M14 14.500h10M5 20.500h5M14 20.500h10M5 26.500h5M14 26.500h10"/></svg><span>TotalPopulation_Countries</span></div>
      <div class="row sel"><i class="tw"></i><i class="ck on"></i><i class="sym"><b class="dot blue"></b></i><span>populated_places</span></div>
      <div class="row"><i class="tw open"></i><i class="ck on"></i><i class="sym"><svg viewBox="0 0 32 24"><path d="M2 3q10 6 28-1 2 9-1 15-14-2-20 4-6 4-8-8z" fill="#dedede" stroke="#8a8a85" stroke-width="2"/></svg></i><span>admin_0_countries_UNPop</span></div>
      <div class="row cls"><i class="ck on"></i><i class="sw w1"></i><span>1 - 17015</span></div>
      <div class="row cls"><i class="ck on"></i><i class="sw w2"></i><span>17015 - 51733</span></div>
      <div class="row cls"><i class="ck on"></i><i class="sw w3"></i><span>51733 - 118618</span></div>
      <div class="row cls"><i class="ck on"></i><i class="sw w4"></i><span>118618 - 309876</span></div>
      <div class="row cls"><i class="ck on"></i><i class="sw w5"></i><span>309876 - 1340969</span></div>
      <div class="row"><i class="tw shut"></i><i class="ck on"></i><i class="sym"><svg class="ras" viewBox="0 0 27 27"><path d="M0 0h27v18h-9v9H0z" fill="#b0c8e4"/><path d="M0 0h9v9H0zM18 0h9v9h-9zM9 9h9v9H9zM0 18h9v9H0z" fill="#2b3e50"/></svg></i><span>gpw_v4_2010</span></div>
      <div class="row dim"><i class="tw"></i><i class="ck"></i><i class="sym"><b class="box"></b></i><span>admin_0_countries</span></div>
      <div class="row dim"><i class="tw"></i><i class="ck"></i><i class="sym"><b class="dot orange"></b></i><span>populated_places_2mil</span></div>
    </div>
  </section>
  <section class="canvas">
    <svg id="world" viewBox="829 203 2049 597">
      <defs>
        <filter id="rough" x="-5%" y="-5%" width="110%" height="110%"><feTurbulence type="fractalNoise" baseFrequency=".13" numOctaves="3" seed="4"/><feDisplacementMap in="SourceGraphic" scale="6" xChannelSelector="R" yChannelSelector="G"/></filter>
        <filter id="rougher" x="-5%" y="-10%" width="110%" height="120%"><feTurbulence type="fractalNoise" baseFrequency=".09 .16" numOctaves="3" seed="9"/><feDisplacementMap in="SourceGraphic" scale="16" xChannelSelector="R" yChannelSelector="G"/></filter>
      </defs>
      <g class="land" filter="url(#rough)">
        <g transform="translate(1000 420) scale(.41454 .33333)">
          <path fill="#e4e4e4" d="M1060 242L1100 250 1150 240 1190 240 1215 262 1250 268 1290 262 1345 275 1400 268 1450 250 1420 292 1360 320 1300 345 1250 370 1215 400 1185 443 1205 450 1232 455 1235 500 1225 545 1245 540 1275 490 1320 465 1345 415 1380 360 1410 355 1440 380 1430 425 1482 400 1475 450 1500 500 1490 540 1420 560 1365 565 1310 610 1240 660 1200 668 1150 690 1140 650 1120 602 1075 595 1050 583 740 583 745 545 770 490 800 450 840 400 815 385z"/>
          <path fill="#b4b4b4" d="M1060 242L1005 222 920 238 835 262 790 290 720 300 715 318 750 322 640 350 590 380 575 412 610 420 500 465 440 487 520 470 620 436 700 405 780 380 805 392 800 420 770 470 745 545 755 550 800 460 838 400 815 385z"/>
          <path fill="#a8a8a8" d="M620 310L755 255 735 300 650 322z"/>
          <path fill="#b4b4b4" d="M740 583H1050L1075 595 1110 598 1135 630 1140 665 1130 695 1170 685 1230 662 1315 610 1318 655 1285 675 1245 700 1210 740 1165 770 1145 800 1140 845 1090 870 1045 920 1030 950 1028 1020 1010 1035 998 1000 985 955 930 945 910 965 870 955 815 990 790 1035 780 1010 775 960 745 968 735 930 715 912 665 922 630 905 600 880 595 770 640 700 700 625 725 590z"/>
          <path fill="#cdcdcd" d="M632 905L665 922 715 912 735 930 745 968 775 960 780 1010 797 1035 770 1100 780 1150H670L660 1080 640 1000 632 940z"/>
          <path fill="#cdcdcd" d="M600 910L598 960 583 985 605 1015 600 1060 618 1092 622 1060 608 1000 620 975 628 935z"/>
          <path fill="#e4e4e4" d="M1490 545L1480 580 1490 610 1425 605zM1330 620L1350 590 1375 600 1350 640 1400 630 1320 685 1315 650z"/>
          <path fill="#cdcdcd" d="M945 1112L985 1090 1060 1130 1060 1140 1000 1112z"/>
        </g>
        <g transform="translate(1550 420) scale(.3699 .33333)">
          <path fill="#fcfcfc" d="M400 152L448 160 430 220 405 265 370 290 350 330 345 380 380 395 400 375 450 320 490 300 560 265 640 240 660 205 700 165 715 120 765 95 720 72 640 85 560 95 440 130 400 138z"/>
          <path fill="#fcfcfc" d="M610 300L640 305 690 290 698 315 670 335 630 330 618 322z"/>
          <path fill="#fcfcfc" d="M940 380L938 330 952 290 975 262 1010 255 1040 240 1065 250 1100 310 1122 350 1110 390 1050 395 1035 370 1050 315 1030 305 1015 330 990 350 998 410 1000 440 975 480 955 440z"/>
          <path fill="none" d="M1010 255L1035 280 1050 315"/>
          <path fill="#cdcdcd" d="M745 445L765 420 805 408 785 440 800 480 852 540 770 562 795 530 775 510z"/>
          <path fill="#fcfcfc" d="M710 490L755 475 760 510 735 535 705 530z"/>
          <path fill="#ccc" d="M770 595L810 590 830 575 900 560 945 590 940 650 905 685 860 690 805 685 810 640z"/>
          <path fill="#ddd" d="M905 500L990 490 1040 480 1090 490 1095 560 1180 530 1250 535 1310 620 1250 630 1195 655 1170 700 1090 700 1060 660 960 640 930 600z"/>
          <path fill="#fafafa" d="M1050 395L1115 398 1130 460 1190 510 1180 530 1095 545 1080 485 1045 480z"/>
          <path fill="none" d="M1050 430L1110 425M1050 465L1130 460M1000 490L985 560M1095 560L1060 600 960 590M1100 600L1060 660M1170 600L1130 650"/>
          <path fill="#f4f4f4" d="M912 500L910 455 930 430 940 460 930 495z"/>
          <path fill="#ddd" d="M710 685L805 688 835 712 825 760 805 800 740 830 705 808 712 740z"/>
          <path fill="none" d="M715 715L735 720 722 810"/>
          <path fill="#ccc" d="M915 665L990 640 975 670 1000 710 1060 750 1040 800 1020 755 965 710 940 680zM932 735h16v35h-16zM985 790l50 5-10 20z"/>
          <path fill="#eee" d="M1080 700L1170 710 1150 750 1190 830 1130 810 1100 770z"/>
          <path fill="#cdcdcd" d="M1165 745L1240 725 1330 735 1400 735 1412 790 1320 815 1230 825 1180 790z"/>
          <path fill="#b4b4b4" d="M1580 155L1500 150 1440 145 1400 165 1388 205 1440 225 1430 260 1455 285 1440 290 1400 255 1340 197 1320 195 1345 240 1400 258 1300 240 1220 285 1195 315 1150 325 1135 298 1180 290 1150 260 1090 245 1062 250 1100 310 1125 350 1115 400 1130 460 1190 510 1200 530 1250 535 1300 575 1310 620 1300 650 1380 680 1448 728 1420 680 1420 640 1390 600 1380 565 1410 540 1480 550 1535 550 1515 495 1580 485"/>
          <path fill="#b4b4b4" d="M1195 160L1240 148 1218 175 1230 205 1262 227 1220 220 1200 195z"/>
          <path fill="#fcfcfc" d="M1515 495L1535 550 1480 550 1410 540 1380 565 1390 600 1420 640 1475 620 1480 650 1450 660 1490 710 1520 708 1545 735 1580 720 1580 487"/>
        </g>
        <g transform="translate(2100 420) scale(.38265 .33333)">
          <path fill="#b4b4b4" d="M0 150L40 152 75 170 90 195 180 190 250 200 325 225 365 215 340 205 400 208 480 225 560 230 630 245 700 240 765 250 860 290 930 318 1012 352 985 355 1008 390 950 390 985 425 1050 455 1085 490 1110 530 1120 550 1060 515 1000 480 945 430 915 375 870 355 895 380 835 368 860 400 765 405 795 480 850 490 900 510 960 565 1000 620 1017 690 1000 700 950 660 920 600 830 570 700 505 675 515 700 570 630 580 560 565 500 565 455 535 470 568 400 555 370 580 300 555 240 515 180 495 150 503 90 475 30 495 45 550 0 550"/>
          <path fill="#fcfcfc" d="M30 495L90 475 150 503 180 495 240 515 300 555 370 580 340 620 355 650 330 665 350 705 230 700 160 685 120 685 55 650 35 660 45 725 10 700 0 550 45 550z"/>
          <path fill="#f8f8f8" d="M160 685L230 700 350 705 300 750 330 800 290 785 220 745z"/>
          <path fill="#e0e0e0" d="M35 660L55 650 120 685 165 685 220 745 200 790 150 770 100 720 45 725z"/>
          <path fill="#f8f8f8" d="M30 735L100 722 150 770 215 780 190 845 150 800 60 800z"/>
          <path fill="#ccc" d="M0 800L60 800 110 785 170 840 175 900 210 960 235 1045 160 1015 120 1010 60 960 0 900z"/>
          <path fill="#e8e8e8" d="M170 840L215 790 290 785 300 850 310 870 295 930 260 955 210 960 175 900z"/>
          <path fill="#b0b0b0" d="M210 960L260 955 300 930 330 880 350 940 330 1000 300 1045 235 1045z"/>
          <path fill="#fdfdfd" d="M370 580L400 555 470 568 455 535 500 540 560 570 630 580 690 565 710 605 775 620 710 660 725 695 670 718 550 697 530 670 450 650 430 615z"/>
          <path fill="#9a9a9a" d="M370 580L430 615 450 650 530 670 550 697 670 718 725 695 710 660 775 620 710 605 690 560 675 515 700 505 830 570 920 600 960 660 988 690 960 740 915 755 875 765 870 790 955 800 930 830 1000 900 1040 960 1040 1040 1010 1100 950 1150 800 1150 760 1080 730 1010 690 995 600 1010 500 985 440 930 380 850 300 800 300 750 350 705 330 665 355 650 340 620z"/>
          <path fill="#747474" d="M320 880L345 860 430 930 470 975 600 1010 690 995 690 1150H380L350 1105 370 1080 330 1040 300 1045 340 990z"/>
          <path fill="#ddd" d="M690 1010L715 985 745 1040 810 1110 850 1095 880 1150H700z"/>
          <path fill="#e8e8e8" d="M950 745L985 725 1000 800 985 790 960 760z"/>
          <path fill="#999" d="M985 790L1010 800 1030 850 1000 830z"/>
          <path fill="#999" d="M1055 650L1100 670 1155 690 1140 712 1105 700zM1130 730L1180 780 1190 850 1140 880 1095 880 1150 840z"/>
          <path fill="#aaa" d="M885 490L960 530 1060 625 1070 638 1000 595 930 540z"/>
          <path fill="#e4e4e4" d="M-20 940L30 970 90 1060 155 1095V1150H-20z"/>
          <path fill="none" d="M155 1095L150 1050 210 1100 205 1150"/>
        </g>
      </g>
      <g class="land" transform="translate(1550 420) scale(.3699 .33333)">
        <path fill="#e4e4e4" d="M735 850L800 850 930 842 930 880 965 935 965 1030 1000 1080 930 1140H845L700 1005 695 1028 650 1030V1060L610 1120 570 1125 600 1050 670 990 690 940 700 890z"/>
        <path fill="#fcfcfc" d="M930 842L970 840 965 880 1000 905 1090 942 1130 893 1175 915 1185 960 1195 1115V1150H1140L1055 1085 1035 1097 1000 1080 965 1030 965 935z"/>
        <path fill="#ccc" d="M1175 915L1310 925 1305 980 1350 1110H1195L1185 960z"/>
        <path fill="none" d="M800 850L805 900 700 975V1005M570 1125h60l5-40 15-55M730 1150l-2-100h25M1045 1090l5 50M1195 1115v30M1350 1110l20 30M700 1005L845 1140M1320 1000L1370 1100"/>
        <path fill="#e4e4e4" d="M1320 815L1400 800 1390 860 1330 915z"/>
        <path fill="#dcdcdc" d="M1390 810L1440 830 1500 960 1490 970 1450 960 1365 910 1390 860z"/>
        <path fill="#c8c8c8" d="M1580 800L1520 800 1412 770 1440 830 1490 930 1540 950 1580 960"/>
        <path fill="#e4e4e4" d="M1580 1070L1490 968 1450 960 1365 910 1330 915 1320 965 1330 1010 1400 1150H1580"/>
      </g>
      <g class="isles" filter="url(#rougher)">
        <g transform="translate(1000 420) scale(.41454 .33333)">
          <path fill="#e2e2e2" d="M1230 215L1340 180 1345 195 1290 205 1370 205 1340 240 1290 262 1240 255zM1375 155L1450 142 1440 162 1385 178z"/>
          <path fill="#e2e2e2" d="M1380 240L1440 200 1530 185 1600 190 1560 210 1510 235 1470 280 1400 330zM1520 210L1600 195 1570 300 1520 300 1490 350 1450 340 1440 310 1500 290z"/>
          <path fill="none" d="M1350 290l30 30M1200 265l110 0M1340 350l60-40 20 10M1440 380l30-15M1150 240h50M1100 248l60-8M730 480l-10 60M770 470l-25 70M780 430l50-30M725 560h30"/>
        </g>
        <g transform="translate(1550 420) scale(.3699 .33333)">
          <path fill="#ccc" d="M310 130L350 105 440 90 560 80 520 95 400 125zM200 165L330 140 290 170 230 178zM60 155L170 140 150 155 70 178z"/>
          <path fill="#e2e2e2" d="M150 215L215 190 280 195 290 250 265 285 230 300 190 365 150 335 175 270zM60 215L140 188 200 190 120 220zM20 250L110 222 150 235 90 262 30 280zM10 300L90 275 60 310 20 325z"/>
          <path fill="none" d="M240 130h40M175 150h60M0 190l50-5M70 200l60-8M20 235h60M110 250l40 20M60 340l40-20M400 200l20 60-30 40-30 30-15 50M560 262l-60 35-60 40M640 200l50-30M600 232l40-12M1050 100h80M1265 98l80 20 40 10M1380 175l40 10M1395 200l40 30M1350 145v30M420 92h150M600 88l110-12"/>
        </g>
        <g transform="translate(2100 420) scale(.38265 .33333)"><path fill="none" d="M190 160h60l60 12M245 180h30M300 188h30M150 190h30M185 185l60 20M280 210l50 15M630 240h60M600 248l30 10M660 220l25 5M880 355l40 30M340 205h60M540 228h30M870 405h-30M810 480h40"/></g>
      </g>
      <g class="chain">
        <path d="M1087 601L1120 596 1150 590 1182 583M1181 580l25-7M1228 546l4-1M1347 494h10M1184 568h6"/>
        <path d="M2528 612L2540 622 2542 640 2537 652M2524 577l16 6M2576 591l12 2M2590 595h4M2604 597l16 4M2538 730l3 20-2 14M2610 752l6 8M2528 775h4M2560 725l4 4M2520 700l6 16"/>
        <path d="M1702 673h2M1711 677l8 2M1727 685h2M1757 750l16-3M1778 745l6-6M1767 716h2M1395 763l22 30M1440 756l20 20M1432 790l20 10M1363 792h20M1230 744v3M1806 541l4-3"/>
      </g>
      <g id="speckle"></g>
      <g transform="translate(2100 420) scale(.38265 .33333)"><path fill="#e8e8e8" d="M475 948L530 975 580 992 560 1006 480 975zM605 990h30v20h-30z"/></g>
      <g id="places"></g>
    </svg>
  </section>
</main>
<script src="app.js"></script>
</body>
</html>
```
FILE: styles.css
```css
* { box-sizing: border-box; margin: 0; padding: 0; }
html { background: #000; }
body { width: 2880px; height: 800px; overflow: hidden; background: #ececec; font-family: Inter, "Liberation Sans", sans-serif; color: #262626; display: flex; flex-direction: column; position: relative; border-top: 2px solid #000; }
.defs { position: absolute; }
.titlebar { height: 44px; flex: none; border-bottom: 1px solid #9b9b9b; background: linear-gradient(#e7e7e7, #cdcdcd); display: grid; grid-template-columns: 1fr auto 1fr; align-items: center; border-radius: 8px 8px 0 0; box-shadow: 0 -8px 0 8px #000; clip-path: inset(0); }
.lights { display: flex; gap: 16px; padding-left: 16px; }
.lights i { width: 24px; height: 24px; border-radius: 50%; background: #8e8d91; border: 1px solid #757579; }
.titlebar h1 { font-size: 25px; font-weight: 400; color: #4a4a4a; letter-spacing: .25px; line-height: 30px; padding-top: 2px; -webkit-text-stroke: .4px #4a4a4a; }
.toolbar { height: 77px; flex: none; display: flex; align-items: center; background: linear-gradient(#f6f6f6, #ebebeb); border-bottom: 2px solid #b2b2b2; padding-top: 1px; }
.toolbar.second { height: 78px; border-top: 1px solid #e2e2e2; }
.btn { width: 66px; height: 62px; flex: none; display: grid; place-items: center; }
.btn svg { width: 48px; height: 48px; }
.btn > svg { overflow: hidden; }
.btn.on { width: 64px; margin: 0 1px; border: 2px solid #a8a8a8; border-radius: 5px; background: #d9d9d9; }
.btn.off > svg { filter: saturate(.22); opacity: .32; }
.btn svg svg { width: auto; height: auto; }
.handle { width: 32px; height: 34px; flex: none; display: flex; justify-content: flex-end; padding-right: 6px; }
.handle.first { width: 25px; }
.handle::before { content: ""; width: 9px; height: 34px; background: radial-gradient(circle, #b4b4b4 1px, transparent 1.500px) 0 0 / 6px 6px; }
.drop { width: 24px; flex: none; display: grid; place-items: center; }
.toolbar .drop { width: 24px; }
.toolbar .drop::before { margin-left: -2px; }
.drop::before { content: ""; border: 7.500px solid transparent; border-top: 8px solid #555; border-bottom: 0; }
.mini { position: relative; }
.mini::after { content: ""; position: absolute; left: 47px; top: 50px; border: 6px solid transparent; border-top: 6px solid #444; border-bottom: 0; }
.marker { position: absolute; left: 270px; top: 30px; width: 106px; height: 106px; }
.marker circle { fill: none; stroke: #f0f; stroke-width: 6; }
.glyph { font-family: "Open Sans", sans-serif; }
.serif { font-family: "Liberation Serif", serif; }
.label { font-family: "Open Sans", sans-serif; font-weight: 700; fill: #2a2a2a; }
.work { flex: 1; display: flex; min-height: 0; padding-top: 1px; }
.side { width: 104px; flex: none; background: linear-gradient(90deg, #f6f6f6, #ebebeb); border-right: 3px solid #b2b2b2; padding-top: 10px; }
.grip { width: 34px; height: 12px; margin-left: 37px; background: radial-gradient(circle, #b4b4b4 1px, transparent 1.500px) 0 0 / 6px 6px; margin-bottom: 2px; }
.tool { height: 64px; display: flex; align-items: center; padding-left: 16px; }
.tool svg { width: 48px; height: 48px; flex: none; }
.tool .drop { margin-left: 8px; }
.panel { width: 724px; flex: none; display: flex; flex-direction: column; }
.panel-head { height: 40px; display: flex; align-items: center; gap: 6px; padding: 0 16px 0 9px; }
.panel-head h2 { flex: 1; font-size: 23px; font-weight: 400; letter-spacing: -.5px; padding-top: 1px; }
.pbtn { width: 22px; height: 22px; fill: none; stroke: #6a6a66; stroke-width: 2; }
.pbtn .x { stroke-width: 4; }
.panel-tools { height: 60px; display: flex; align-items: center; padding: 0 0 4px 7px; }
.panel-tools > svg { width: 36px; height: 36px; margin: 0 7px; }
.panel-tools .drop { width: 24px; }
.tree { flex: 1; width: 711px; border: 1px solid #b4b4b4; border-left-width: 2px; border-bottom: 0; background: #fff; padding-top: 1px; }
.row { height: 36px; display: flex; align-items: center; font-size: 26px; font-weight: 700; line-height: 36px; letter-spacing: -.07px; white-space: nowrap; }
.row.table { padding-left: 48px; gap: 15px; }
.ticon { width: 28px; height: 32px; fill: #e8e8e6; stroke: #888a85; stroke-width: 2; }
.row.sel { background: #dcdcdc; color: #000; }
.row.sel span { text-decoration: underline; text-decoration-thickness: 3px; text-underline-offset: 4px; text-decoration-skip-ink: none; }
.row.cls { height: 40px; font-weight: 400; color: #000; padding-left: 86px; letter-spacing: 0; }
.tw { width: 46px; flex: none; display: flex; padding-left: 12px; }
.tw.open::before { content: ""; border: 7.500px solid transparent; border-top: 8px solid #555; border-bottom: 0; }
.tw.shut::before { content: ""; margin-left: 4px; border: 7.500px solid transparent; border-left: 8px solid #555; border-right: 0; }
.ck { width: 28px; height: 28px; flex: none; border: 2px solid #b8b8b8; background: linear-gradient(#f3f3f3, #fff 20%); display: grid; place-items: center; }
.ck.on::before { content: ""; width: 16px; height: 18px; background: currentColor; clip-path: polygon(0 54%, 15% 46%, 36% 74%, 84% 0, 100% 5%, 46% 100%, 30% 100%); }
.sym { width: 32px; height: 32px; margin: 0 12px; flex: none; display: grid; place-items: center; }
.sym svg { width: 32px; height: 24px; }
.sym .ras { width: 26px; height: 26px; }
.dot { width: 11px; height: 11px; border-radius: 50%; }
.dot.blue { background: #9dbdd6; border: 2px solid #5b9cc8; }
.dot.orange { background: #ff7f00; border: 2px solid #3a3a30; }
.box { width: 32px; height: 32px; border: 2px solid #999; border-right-width: 3px; border-bottom-width: 3px; background: #fff; }
.sw { width: 36px; height: 36px; margin: 0 12px; border: 2px solid #999; flex: none; }
.w1 { background: #fafafa; }
.w2 { background: #bcbcbc; border-color: #7c7c7c; }
.w3 { background: #808080; border-color: #4c4c4c; }
.w4 { background: #404040; border-color: #222; }
.w5 { background: #030303; border-color: #000; }
.dim { color: #bababa; font-style: italic; }
.canvas { flex: 1; background: #fff; border: 1px solid #b4b4b4; border-bottom: 0; margin-right: 1px; overflow: hidden; }
.canvas svg { display: block; width: 2049px; height: 597px; }
.land path, .isles path { stroke: #999; stroke-width: 1.300px; vector-effect: non-scaling-stroke; stroke-linejoin: round; }
.isles path { stroke-width: 2px; }
.chain path { fill: none; stroke: #999; stroke-width: 2.200px; stroke-dasharray: 5 2 2 3 7 3; }
#places circle { fill: #1f78b4; fill-opacity: .4; stroke: #1878b8; stroke-width: 1; }
```
FILE: app.js
```js
// Toolbars are declared as icon lists: "|" handle, "v" drop-down, "-" disabled, "*" pressed.
document.querySelectorAll('.toolbar').forEach(bar => {
  let html = '<div class="handle first"></div>';
  bar.dataset.icons.split(' ').forEach(tok => {
    if (tok === '|') { html += '<div class="handle"></div>'; return; }
    if (tok === 'v') { html += '<b class="drop"></b>'; return; }
    let cls = 'btn';
    if (tok[0] === '-') { cls += ' off'; tok = tok.slice(1); }
    if (tok[0] === '*') { cls += ' on'; tok = tok.slice(1); }
    if (tok === 'edits') cls += ' mini';
    const id = tok[0] === '=' ? tok.slice(1) : 'i-' + tok;
    html += `<div class="${cls}"><svg><use href="#${id}"/></svg></div>`;
  });
  bar.innerHTML = html;
});

// Icons that carry lettering are placed inline, so their symbols can leave the sprite.
const lettered = [...document.querySelectorAll('.defs symbol')].filter(s => s.querySelector('text') || s.id === 'i-pinon');
const inner = id => document.getElementById(id).innerHTML.replace(/<use href="#abpin"[^>]*><\/use>/, () => inner('abpin'));
document.querySelectorAll('.btn > svg > use, .panel-tools > svg > use').forEach(use => {
  const sym = lettered.find(s => '#' + s.id === use.getAttribute('href'));
  if (!sym) return;
  const host = use.parentNode;
  host.setAttribute('viewBox', sym.getAttribute('viewBox'));
  host.innerHTML = inner(sym.id);
});
lettered.forEach(s => s.remove());

let seed = 77;
const rnd = () => (seed = (seed * 16807) % 2147483647) / 2147483647;
const tiles = { a: [1000, .41454], b: [1550, .3699], c: [2100, .38265] };
const px = (t, x) => tiles[t][0] + x * tiles[t][1];
const py = y => 420 + y / 3;

// Big cities: tile, x, y, radius
const cities = [
  ['a',1198,738,19.5],['a',1047,716,13],['a',603,870,15.5],['a',1019,1035,10],['a',1018,872,8.5],['a',856,892,9],['a',851,952,9],['a',758,1037,8],['a',1161,682,9],['a',1244,648,8],['a',1246,707,8],['a',1178,752,10],['a',1150,775,9],['a',1107,704,8],['a',1019,658,6.5],['a',733,610,8],['a',753,578,6],['a',699,648,5.5],['a',597,797,8],['a',674,879,7.5],['a',663,825,5.5],['a',825,757,6],['a',1002,990,6],['a',988,777,5.5],['a',925,502,4],['a',878,546,4],['a',1038,567,3],['a',940,769,4.5],['a',757,738,3.5],['a',726,914,4.5],['a',808,960,5],['a',977,1087,5.5],['a',1218,650,4],['a',1142,812,5],['a',896,827,4],['a',960,846,4],['a',756,847,3.5],['a',705,975,3],['a',1125,746,5],['a',1062,767,5],['a',735,1140,12],['a',685,1142,10],['a',870,1135,4],['a',717,1039,4],['a',618,778,4],
  ['b',1230,464,14],['b',1128,394,9],['b',850,588,13],['b',822,537,12],['b',1200,738,13],['b',1198,725,11.5],['b',774,743,9.5],['b',850,725,9],['b',1265,948,15],['b',1243,925,9],['b',1254,753,7],['b',974,520,7.5],['b',984,716,7.5],['b',718,875,7.5],['b',702,776,7],['b',862,815,7.5],['b',961,815,6],['b',1006,890,5.5],['b',1103,907,4.5],['b',1181,558,6.5],['b',1140,790,7],['b',1439,882,8.5],['b',1524,836,12],['b',1506,1057,8.5],['b',1407,1120,7],['b',1129,496,5.5],['b',1063,525,4.5],['b',779,461,4.5],['b',1149,668,5],['b',1008,736,5.5],['b',1055,610,5.5],['b',1476,744,5.5],['b',1008,402,3.5],['b',1295,454,4.5],['b',1355,464,4],['b',1467,446,4.5],['b',1410,425,4],['b',1250,566,4],['b',1506,960,5.5],['b',1548,1020,5],['b',1402,1060,3.5],['b',1328,822,6],['b',1322,880,7],['b',1310,905,6],['b',1184,780,6],['b',742,802,4.5],['b',1304,613,4.5],['b',1016,600,5],['b',1044,562,5],['b',1356,588,3.5],['b',1386,508,3.5],['b',877,1045,2.5],['b',1542,895,4.5],['b',958,463,4],['b',1074,390,3.5],['b',930,396,3.5],['b',711,728,5],['b',812,661,3.5],['b',1347,981,2.5],['b',890,525,8],['b',918,575,7],['b',945,650,8],['b',805,520,8],['b',925,650,6],
  ['c',1201,836,28.5],['c',1008,925,18],['c',1008,797,13.5],['c',425,975,18],['c',305,1052,15.5],['c',638,1085,19],['c',1160,860,13],['c',900,690,9],['c',1075,1050,10],['c',820,950,13],['c',850,1018,8],['c',878,640,7],['c',431,680,6],['c',1103,693,6],['c',278,859,7],['c',816,612,5],['c',844,626,5],['c',236,477,5],['c',136,478,4],['c',326,460,4],['c',139,825,6],['c',305,688,4.5],['c',227,726,6],['c',745,739,6],['c',722,829,6],['c',920,772,7],['c',1070,848,6],['c',365,910,10],['c',487,1015,6],['c',608,603,3.5],['c',507,524,3],['c',985,1090,14],['c',915,1085,8],['c',390,1095,10],['c',410,1135,10],['c',880,1130,9],['c',1074,1100,6],['c',1034,990,6],['c',1172,785,7],['c',935,830,9],['c',800,850,7],['c',555,1035,5],['c',55,895,4.5],['c',84,1045,4.5],['c',60,1020,5],['c',82,956,4],['c',268,505,3],['c',190,567,2.500],['c',250,915,3],['c',277,943,3.5],['c',353,678,3],['c',1150,1025,3.5],['c',730,1110,4.5],['c',670,1110,7],['c',835,765,9],['c',140,1045,5]
];

// Clusters: tile, centre x, y, spread x, y, count, max radius
const clusters = [
  ['a',900,800,170,120,330,1.7],['a',1060,790,80,90,170,2.2],['a',1050,715,26,20,40,3.5],['a',1200,715,34,20,60,4],['a',1165,755,20,22,36,4],['a',1110,712,20,16,24,3.500],['a',605,870,13,26,44,4.5],['a',600,800,10,18,22,3],['a',1018,1015,8,30,26,4],['a',730,615,12,16,14,2.5],['a',940,540,110,50,50,1],['a',980,430,150,80,20,.7],['a',850,950,20,20,14,3],['a',700,1010,40,60,36,1.7],['a',735,1125,34,12,34,4],['a',1010,1110,34,14,18,2],['a',1100,830,25,25,20,3],['a',1330,640,36,20,16,1],['a',1050,760,20,14,20,3],['a',650,1040,6,40,12,2],['a',790,1030,5,6,4,3],['a',1240,650,40,12,12,2],['a',1020,870,60,50,40,2],
  ['b',805,512,14,22,130,4.5],['b',885,535,16,12,100,4.5],['b',918,560,14,30,130,4.5],['b',935,650,24,12,70,4.5],['b',925,600,12,20,40,4],['b',850,590,26,22,24,3],['b',980,570,60,50,100,3],['b',1050,560,60,50,70,3],['b',1100,640,60,50,90,2.3],['b',1040,690,50,40,50,2],['b',1230,465,28,24,50,3],['b',1280,530,90,60,110,2],['b',1400,460,80,70,80,2.300],['b',1270,600,40,30,36,3],['b',1330,650,50,26,30,2.2],['b',1090,420,40,40,36,1.3],['b',980,420,32,50,36,1.5],['b',770,750,40,45,44,2.2],['b',715,740,8,34,20,3],['b',1195,745,20,24,26,4],['b',1290,770,70,28,70,2.5],['b',1400,750,26,40,40,2.5],['b',1320,870,7,40,60,4],['b',1265,930,18,18,40,4],['b',1285,1020,10,24,12,2.3],['b',880,825,54,8,36,2.5],['b',745,865,24,8,16,3.3],['b',700,920,14,30,10,2],['b',1440,880,26,36,40,3],['b',1520,845,28,40,40,3.2],['b',1500,935,8,30,20,4],['b',1130,780,24,26,30,2.5],['b',970,690,14,22,26,3],['b',1010,735,20,16,20,3.5],['b',1045,745,6,10,8,2.5],['b',990,790,24,6,12,2.2],['b',750,480,14,24,10,2],['b',1080,720,6,24,14,3],['b',1500,330,60,90,26,1.2],['b',1250,330,70,60,18,.9],['b',1430,900,70,70,40,1.6],['b',900,900,70,60,20,1.2],['b',870,640,30,24,30,2.3],['b',920,360,30,70,20,1.2],['b',960,470,20,20,22,2.6],['b',960,850,14,20,12,2],['b',1500,1040,50,50,14,2],['b',1050,990,80,40,8,.8],['b',1160,690,24,20,26,2.500],
  ['c',120,480,80,60,50,1.8],['c',300,480,70,50,50,1.6],['c',450,350,200,80,70,.9],['c',640,450,150,80,40,1],['c',150,600,80,50,30,1],['c',220,740,44,30,50,2.3],['c',262,738,12,5,18,3],['c',230,800,30,20,26,2],['c',60,850,40,50,40,2.2],['c',20,930,10,30,20,4],['c',33,835,18,16,26,4],['c',600,560,60,30,16,1],['c',850,620,40,22,36,2.5],['c',905,670,20,26,46,4.3],['c',850,755,26,22,90,5],['c',905,715,10,18,30,5],['c',870,830,32,28,120,5.3],['c',925,870,30,28,110,5.3],['c',975,925,26,28,90,5.5],['c',930,980,34,30,70,4.6],['c',1012,985,14,32,40,5],['c',980,1085,24,22,60,5.5],['c',810,945,24,24,60,4.5],['c',850,1020,30,26,40,3.5],['c',780,830,40,40,34,3],['c',965,770,12,8,18,4.5],['c',1010,800,14,12,36,4.5],['c',1045,838,14,10,26,4.5],['c',1165,840,22,14,80,4.5],['c',1200,840,8,8,24,4.5],['c',1115,880,12,8,30,4],['c',1170,790,10,16,18,4.5],['c',1140,740,8,10,8,3],['c',1105,695,8,8,10,3],['c',365,915,20,20,60,5],['c',320,860,16,14,24,4.5],['c',425,985,24,22,90,5],['c',500,1020,26,16,30,4.5],['c',625,1085,24,22,90,5.500],['c',395,1100,20,24,46,5],['c',450,1110,50,24,50,3.5],['c',550,1090,50,30,40,3.5],['c',1073,1065,7,20,24,4.5],['c',318,1035,10,12,14,4],['c',140,1045,12,10,10,3.500],['c',335,970,16,30,20,3],['c',940,1110,50,18,40,4],['c',730,1110,8,10,10,3],['c',480,740,110,50,16,1.4],['c',700,790,30,20,14,2.5],['c',900,900,60,60,60,3.5],['c',600,900,80,60,10,1],['c',180,1070,14,8,6,3],['c',350,820,14,20,10,2]
];
const gauss = () => (rnd() + rnd() + rnd() + rnd() - 2) * 1.15;
let svg = '';
clusters.forEach(([t, x, y, sx, sy, n, r]) => {
  for (let i = 0; i < n; i++) {
    const k = rnd();
    const rad = .4 + (r - .4) * (r >= 4 ? k : k * k);
    svg += `<circle cx="${px(t, x + gauss() * sx * 1.35).toFixed(1)}" cy="${py(y + gauss() * sy * 1.35).toFixed(1)}" r="${rad.toFixed(1)}"/>`;
  }
});
cities.forEach(([t, x, y, r]) => {
  svg += `<circle cx="${px(t, x).toFixed(1)}" cy="${py(y).toFixed(1)}" r="${r}"/>`;
});
[[982, 793, 2], [992, 796, 2.5], [1519, 721, 1], [1778, 746, 2], [1781, 749, 2], [1767, 718, 2], [975, 797, 1.5]].forEach(([x, y, r]) => {
  svg += `<circle cx="${x}" cy="${y}" r="${r}"/>`;
});
document.getElementById('places').innerHTML = svg;

// Density raster cells: tile, x, y, spread x, y, count, colour
const cells = [
  ['c',530,1100,85,50,220,'#4a4a4a'],['c',500,1003,34,12,130,'#000'],['c',600,1032,54,12,240,'#000'],['c',350,920,24,34,80,'#333'],['c',400,1080,30,40,90,'#333'],
  ['c',910,900,80,80,300,'#666'],['c',900,860,60,70,140,'#222'],['c',870,1030,90,60,300,'#6c6c6c'],['c',930,960,60,70,80,'#000'],['c',800,780,60,60,80,'#808080'],['c',1150,850,24,20,30,'#222'],
  ['a',1000,800,110,80,90,'#8c8c8c'],['a',950,800,140,90,34,'#111'],['b',960,600,70,60,70,'#777'],['b',980,600,70,70,30,'#111'],['b',1250,560,120,90,26,'#333'],['b',1265,930,16,18,20,'#222'],['c',60,860,60,50,30,'#aaa']
];
svg = '';
cells.forEach(([t, x, y, sx, sy, n, c]) => {
  for (let i = 0; i < n; i++) {
    svg += `<rect x="${Math.round(px(t, x + gauss() * sx))}" y="${Math.round(py(y + gauss() * sy))}" width="2" height="2" fill="${c}"/>`;
  }
});
document.getElementById('speckle').innerHTML = svg;
```
